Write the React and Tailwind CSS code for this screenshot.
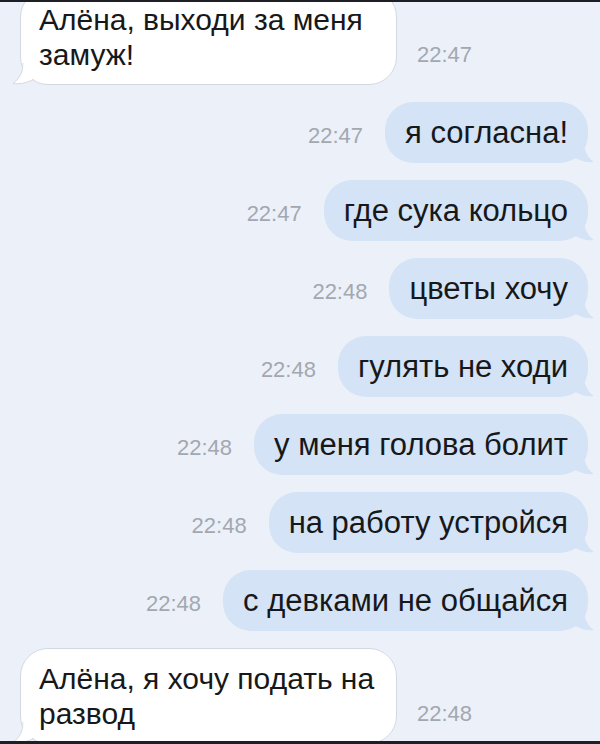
import React from 'react'

const FONT = { fontFamily: '"Liberation Sans", Arial, sans-serif' }

const MESSAGES = [
  { from: 'me', text: 'я согласна!', time: '22:47' },
  { from: 'me', text: 'где сука кольцо', time: '22:47' },
  { from: 'me', text: 'цветы хочу', time: '22:48' },
  { from: 'me', text: 'гулять не ходи', time: '22:48' },
  { from: 'me', text: 'у меня голова болит', time: '22:48' },
  { from: 'me', text: 'на работу устройся', time: '22:48' },
  { from: 'me', text: 'с девками не общайся', time: '22:48' },
]

function OutTail() {
  return (
    <svg
      className="absolute bottom-0 right-[-8px]"
      width="22"
      height="22"
      viewBox="0 0 22 22"
    >
      <path d="M4 0 L10 0 C10 9 13 16 20 21 C13 22 6 20 0 16 Z" fill="#d4e3f6" />
    </svg>
  )
}

function InTail() {
  return (
    <svg
      className="absolute bottom-[-1px] left-[-10px]"
      width="24"
      height="22"
      viewBox="0 0 24 22"
    >
      <path
        d="M22 0 L12 0 C12 9 9 15 2 20.5 C9 21.5 16 20 23 16"
        fill="#ffffff"
        stroke="#d3d9e2"
        strokeWidth="1"
      />
      <rect x="12.5" y="0" width="12" height="16" fill="#ffffff" />
    </svg>
  )
}

function Outgoing({ text, time }) {
  return (
    <div className="flex items-baseline justify-end gap-[22px] pr-[12px]">
      <span className="text-[22px] text-[#a3a8b0]">{time}</span>
      <div className="relative h-[61px] rounded-[28px] bg-[#d4e3f6] px-[20px] py-[13px] text-[31px] leading-[35px] text-[#17181a]">
        {text}
        <OutTail />
      </div>
    </div>
  )
}

function Incoming({ lines, time }) {
  return (
    <div className="flex items-end gap-[20px] pl-[20px]">
      <div className="relative w-[377px] rounded-[28px] border border-[#d3d9e2] bg-white px-[18px] py-[12px] text-[30px] leading-[35px] text-[#17181a]">
        {lines[0]}
        <br />
        {lines[1]}
        <InTail />
      </div>
      <span className="pb-[14px] text-[22px] text-[#a3a8b0]">{time}</span>
    </div>
  )
}

export default function App() {
  return (
    <div
      className="relative h-[744px] w-[600px] overflow-hidden border-t-2 border-b-[3px] border-[#1e1f24] bg-[#ecf1f9]"
      style={FONT}
    >
      <div className="mt-[-13px] flex flex-col gap-[17px]">
        <Incoming lines={['Алёна, выходи за меня', 'замуж!']} time="22:47" />
        {MESSAGES.map((m, i) => (
          <Outgoing key={i} text={m.text} time={m.time} />
        ))}
        <Incoming lines={['Алёна, я хочу подать на', 'развод']} time="22:48" />
      </div>
    </div>
  )
}
